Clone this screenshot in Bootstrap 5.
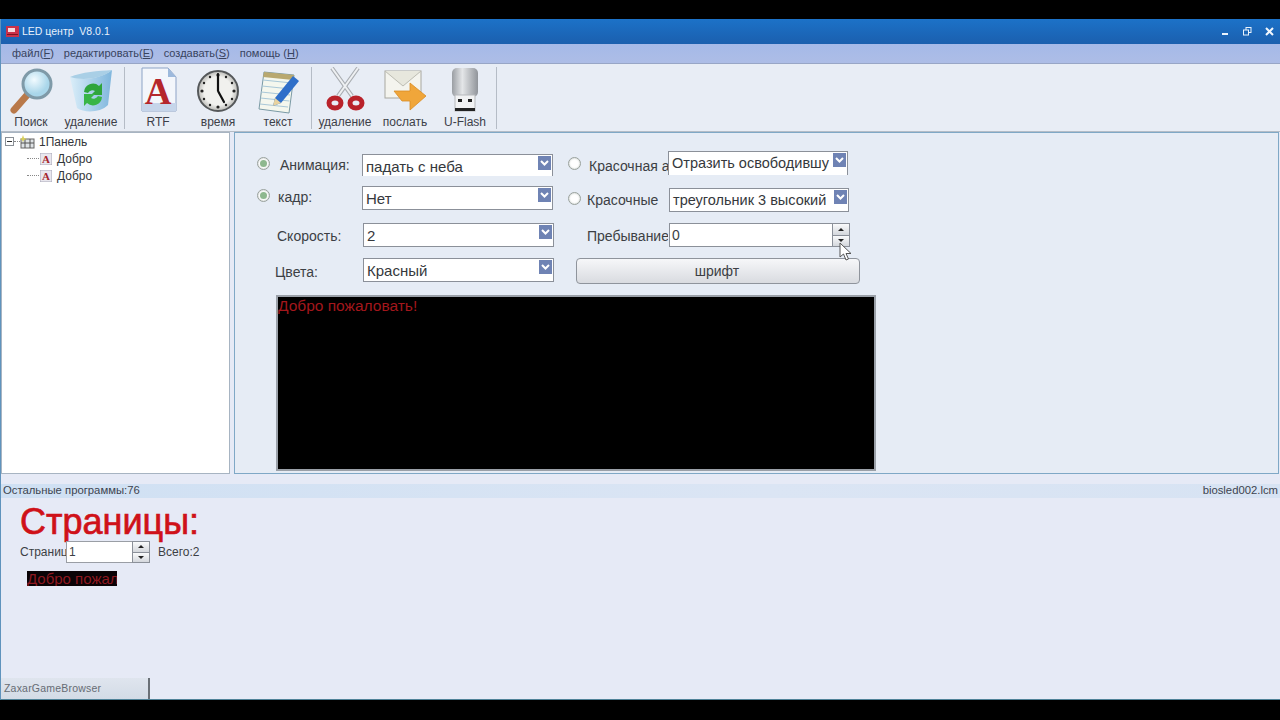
<!DOCTYPE html>
<html lang="ru">
<head>
    <meta charset="UTF-8">
    <title>LED центр</title>
    <link rel="stylesheet" href="https://cdn.jsdelivr.net/npm/bootstrap@5.3.3/dist/css/bootstrap.min.css">
    <style>
        html, body { height: 720px; overflow: hidden; background: #000; }
        body { font-family: "Liberation Sans", Arial, sans-serif; color: #3c3f44; }
        .app-window { margin-top: 19px; height: 681px; position: relative; background: #e6eaf6; border-left: 1px solid #5f93bd; border-bottom: 1px solid #4f8298; }

        /* title + menu */
        .title-bar { height: 25px; background: linear-gradient(#1c72c8, #1b5fae); color: #e8f1fb; font-size: 10.5px; padding: 0 6px 0 5px; }
        .app-logo { width: 13px; height: 11px; margin-right: 3px; }
        .win-btns { gap: 13px; }
        .menu-strip { height: 20px; background: linear-gradient(#a5b9e8, #adbde6); font-size: 11px; color: #38435e; padding-left: 11px; gap: 10px; border-bottom: 1px solid #98a6c6; }

        /* toolbar */
        .tool-strip { height: 68px; background: #e8edf5; border-bottom: 1px solid #b4bcc6; }
        .tool-item { width: 60px; font-size: 12px; color: #3c4048; line-height: 14px; }
        .tool-item svg { width: 50px; height: 48px; margin-top: 3px; }
        .tool-sep { width: 7px; display: flex; justify-content: center; padding: 3px 0 2px; }
        .tool-sep.last-sep { width: 3px; }
        .tool-sep::before { content: ""; width: 1px; background: #b5bcc6; }

        /* tree on the left */
        .work-area { height: 342px; gap: 4px; padding-right: 1px; }
        .tree-pane { width: 229px; background: #fff; border: 1px solid #a7b4c2; font-size: 12px; color: #33363a; padding: 0 0 0 3px; }
        .tree-row { height: 17px; }
        .tree-toggle { width: 9px; height: 9px; border: 1px solid #8a8f96; position: relative; background: #fff; }
        .tree-toggle::after { content: ""; position: absolute; left: 1px; right: 1px; top: 3px; height: 1px; background: #333; }
        .tree-dash { width: 6px; border-top: 1px dotted #888; }
        .tree-child { padding-left: 22px; }
        .tree-child .tree-dash { width: 12px; }
        .tree-child svg { margin: 0 5px 0 1px; }

        /* form on the right */
        .form-pane { flex: 1; background: #e6ecf5; border: 1px solid #7fa8c6; padding: 18px 0 0 20px; font-size: 14px; }
        .form-line { display: grid; grid-template-columns: 107px 192px 14px 100px 192px; }
        .line-a { height: 35px; }
        .line-b { height: 37px; }
        .line-c { height: 35px; }
        .line-d { height: 37px; }
        .field-label { height: 24px; line-height: 20px; white-space: nowrap; overflow: hidden; display: flex; align-items: flex-start; }
        .radio-dot { width: 13px; height: 13px; border-radius: 50%; background: #fff; border: 1px solid #98a09c; flex: none; position: relative; box-shadow: inset 0 0 2px #b5bdb8; }
        .radio-dot.is-on::after { content: ""; position: absolute; inset: 2px; border-radius: 50%; background: #8eb88e; }
        .ind-0 { padding-left: 0; }
        .ind-2 { padding-left: 2px; }
        .ind-22 { padding-left: 22px; }
        .ind-20 { padding-left: 20px; }
        .ind-19 { padding-left: 19px; }
        .gap-6px { margin-right: 6px; }
        .gap-8px { margin-right: 8px; }
        .gap-10px { margin-right: 10px; }
        .drop-1 { margin-top: 1px; }
        .drop-3 { margin-top: 3px; }
        .drop-4 { margin-top: 4px; }
        .drop-5 { margin-top: 5px; }
        .drop-6 { margin-top: 6px; }
        .shift-down { margin-top: 2px; }
        .shift-left { margin-left: 1px; }
        .combo-box { width: 191px; height: 24px; background: #fff; border: 1px solid #8b9099; font-size: 15px; color: #35383c; padding-left: 3px; line-height: 23px; white-space: nowrap; overflow: hidden; position: relative; }
        .combo-box.wide-r { width: 180px; font-size: 14.5px; }
        .combo-box.open-end { border-bottom: 0; }
        .combo-box.short-box { height: 22px; margin-top: 3px; }
        .combo-arrow { position: absolute; right: 1px; top: 1px; width: 13px; height: 14px; background: #6f83b4; display: flex; align-items: center; justify-content: center; }
        .spin-field { width: 181px; height: 24px; background: #fff; border: 1px solid #8b9099; font-size: 14px; line-height: 22px; padding-left: 2px; }
        .spin-btns { width: 18px; margin-right: -1px; margin-top: -1px; margin-bottom: -1px; }
        .spin-btns span { flex: 1; background: linear-gradient(#fafbfc, #d4d7dc); border: 1px solid #8b9099; display: flex; align-items: center; justify-content: center; }
        .spin-btns span + span { border-top: 0; }
        .tri-up { width: 0; height: 0; border: 3px solid transparent; border-top: 0; border-bottom: 3px solid #222; }
        .tri-down { width: 0; height: 0; border: 3px solid transparent; border-bottom: 0; border-top: 3px solid #222; }
        .font-btn { width: 284px; height: 26px; padding: 0 2px 0 0; font-size: 14px; color: #3c3f44; border: 1px solid #8f949c; border-radius: 4px; background: linear-gradient(#f6f7f9, #d9dbe0); margin-left: 8px; }
        .led-screen { width: 600px; height: 176px; margin-left: 21px; background: #000; border: 2px solid #9aa0a8; color: #a3171c; font-size: 15.5px; line-height: 18px; }

        /* status + pages */
        .status-strip { height: 14px; margin-top: 10px; background: linear-gradient(90deg, #cfe0f3, #dbe5f4 60%, #d7e3f3); font-size: 11.3px; line-height: 13px; color: #3d4450; padding: 0 2px; }
        .pages-pane { flex: 1; padding: 5px 0 0 19px; min-height: 0; }
        .pages-title { font-size: 36px; line-height: 38px; color: #cf1119; -webkit-text-stroke: .7px #cf1119; }
        .pages-row { height: 22px; font-size: 12px; color: #3c3f44; }
        .pages-name { width: 46px; overflow: hidden; white-space: nowrap; }
        .pages-spin { width: 84px; height: 22px; background: #fff; border: 1px solid #9a9ea5; padding-left: 2px; line-height: 20px; }
        .pages-total { margin-left: 8px; }
        .page-thumb { width: 90px; height: 15px; margin: 8px 0 0 7px; background: #0a0306; color: #8e1820; font-size: 15px; line-height: 15px; overflow: hidden; white-space: nowrap; }
        .task-tab { width: 149px; height: 21px; background: linear-gradient(#dfe5ee, #d3dbe6); color: #666c74; font-size: 10.5px; line-height: 21px; padding-left: 3px; border-right: 2px solid #6a7077; letter-spacing: .2px; margin-top: auto; }
        .mouse-cursor { position: absolute; left: 838px; top: 223px; width: 13px; height: 19px; }
    </style>
</head>
<body>
    <div class="app-window d-flex flex-column">
        <!-- Title -->
        <div class="title-bar d-flex align-items-center">
            <svg class="app-logo" viewBox="0 0 13 11"><rect width="13" height="11" fill="#c9324a"/><rect x="2" y="2" width="7" height="4" fill="#f4d9dd"/><rect x="1" y="8" width="11" height="1" fill="#7c1420"/></svg>
            <span>LED центр&nbsp; V8.0.1</span>
            <div class="win-btns d-flex align-items-center ms-auto">
                <svg width="9" height="9" viewBox="0 0 9 9"><rect x="1" y="6" width="6" height="2" fill="#eaf3fc"/></svg>
                <svg width="9" height="9" viewBox="0 0 9 9" fill="none" stroke="#eaf3fc"><rect x="3" y=".5" width="5" height="5"/><rect x=".5" y="3" width="5" height="5" fill="#1b66b6"/></svg>
                <svg width="9" height="9" viewBox="0 0 9 9" stroke="#f2f7fd" stroke-width="2"><path d="M1 1l7 7M8 1l-7 7"/></svg>
            </div>
        </div>
        <div class="menu-strip d-flex align-items-center">
            <span>файл(<u>F</u>)</span>
            <span>редактировать(<u>E</u>)</span>
            <span>создавать(<u>S</u>)</span>
            <span>помощь (<u>H</u>)</span>
        </div>

        <!-- Toolbar -->
        <div class="tool-strip d-flex">
            <div class="tool-item text-center">
                <svg viewBox="0 0 50 48"><defs><radialGradient id="lens" cx=".4" cy=".35"><stop offset="0" stop-color="#f2fbff"/><stop offset="1" stop-color="#a9d6ea"/></radialGradient></defs><path d="M8 43L22 27" stroke="#b9794a" stroke-width="7" stroke-linecap="round"/><circle cx="31" cy="17" r="14" fill="url(#lens)" stroke="#7f9aa8" stroke-width="3"/></svg>
                <div>Поиск</div>
            </div>
            <div class="tool-item text-center">
                <svg viewBox="0 0 50 48"><defs><linearGradient id="bin" x1="0" x2="1"><stop offset="0" stop-color="#dbeef9"/><stop offset="1" stop-color="#7fb6dd"/></linearGradient></defs><path d="M4 10C16 14 34 12 46 3L42 38C34 46 18 46 11 41Z" fill="url(#bin)"/><path d="M4 10C16 5 32 4 46 3C36 12 16 14 4 10Z" fill="#a9cfe6"/><path d="M18 25a9 9 0 0 1 15-6l3-3v12H25l4-4a5 5 0 0 0-7 2z" fill="#2fa53c"/><path d="M36 30a9 9 0 0 1-15 6l-3 3V27h11l-4 4a5 5 0 0 0 7-2z" fill="#38b546"/></svg>
                <div>удаление</div>
            </div>
            <div class="tool-sep"></div>
            <div class="tool-item text-center">
                <svg viewBox="0 0 50 48"><path d="M9 1H35L43 10V44H9Z" fill="#f3f6fb" stroke="#8da3c6"/><path d="M35 1V10H43Z" fill="#9db9dc"/><rect x="9" y="36" width="34" height="8" fill="#c6d5ea"/><text x="25" y="37" font-family="Liberation Serif" font-weight="700" font-size="37" fill="#b5272c" text-anchor="middle">A</text></svg>
                <div>RTF</div>
            </div>
            <div class="tool-item text-center">
                <svg viewBox="0 0 50 48"><defs><radialGradient id="face"><stop offset=".7" stop-color="#f1f1ee"/><stop offset="1" stop-color="#b9b9b5"/></radialGradient></defs><circle cx="25" cy="24" r="20" fill="url(#face)" stroke="#55585a" stroke-width="2"/><g fill="#222"><circle cx="25" cy="8" r="1.6"/><circle cx="33" cy="10" r="1.2"/><circle cx="39" cy="16" r="1.2"/><circle cx="41" cy="24" r="1.6"/><circle cx="39" cy="32" r="1.2"/><circle cx="33" cy="38" r="1.2"/><circle cx="25" cy="40" r="1.6"/><circle cx="17" cy="38" r="1.2"/><circle cx="11" cy="32" r="1.2"/><circle cx="9" cy="24" r="1.6"/><circle cx="11" cy="16" r="1.2"/><circle cx="17" cy="10" r="1.2"/></g><path d="M25 24V7M25 24l6 11" stroke="#111" stroke-width="2.2" stroke-linecap="round"/></svg>
                <div>время</div>
            </div>
            <div class="tool-item text-center">
                <svg viewBox="0 0 50 48"><path d="M11 5L41 8L36 46L6 42Z" fill="#f4f7ee" stroke="#7a9aa5"/><path d="M10 13l29 3M9 19l29 3M8 25l29 3M7.500 31l29 3M7 37l28 3" stroke="#a9c8d8"/><path d="M11 5L41 8L40 13L10 10Z" fill="#b8a86f"/><path d="M22 31L40 9L46 14L28 36L20 39Z" fill="#2f6fc9"/><path d="M22 31L28 36L20 39Z" fill="#e8d3a0"/></svg>
                <div>текст</div>
            </div>
            <div class="tool-sep"></div>
            <div class="tool-item text-center">
                <svg viewBox="0 0 50 48"><path d="M12 1L32 29M38 1L18 29" stroke="#a9adb2" stroke-width="4"/><path d="M12 1L32 29M38 1L18 29" stroke="#eef0f2" stroke-width="2"/><ellipse cx="15" cy="36" rx="6" ry="5" fill="#e8edf5" stroke="#b9222a" stroke-width="5"/><ellipse cx="36" cy="36" rx="6" ry="5" fill="#e8edf5" stroke="#b9222a" stroke-width="5"/></svg>
                <div>удаление</div>
            </div>
            <div class="tool-item text-center">
                <svg viewBox="0 0 50 48"><rect x="5" y="4" width="36" height="27" fill="#f4f4ee" stroke="#a8a8a0"/><path d="M5 4L23 19L41 4" fill="#e7e7dd" stroke="#bdbdb3"/><path d="M14 24H30V16L46 29L30 43V34H22Z" fill="#f0a63a" stroke="#d98d24" stroke-width=".8"/></svg>
                <div>послать</div>
            </div>
            <div class="tool-item text-center">
                <svg viewBox="0 0 50 48"><defs><linearGradient id="usb" x1="0" x2="1"><stop offset="0" stop-color="#9a9ea3"/><stop offset=".4" stop-color="#e4e6e8"/><stop offset="1" stop-color="#90949a"/></linearGradient></defs><rect x="12" y="1" width="26" height="29" rx="5" fill="url(#usb)"/><rect x="15" y="28" width="20" height="16" fill="#f1f2f3" stroke="#b5b8bb"/><rect x="18" y="32" width="4" height="3" fill="#222"/><rect x="28" y="32" width="4" height="3" fill="#222"/><rect x="15" y="41" width="20" height="3" fill="#222"/></svg>
                <div>U-Flash</div>
            </div>
            <div class="tool-sep last-sep"></div>
        </div>

        <!-- Tree and form -->
        <div class="work-area d-flex">
            <div class="tree-pane">
                <div class="tree-row d-flex align-items-center">
                    <span class="tree-toggle"></span><span class="tree-dash"></span>
                    <svg width="15" height="14" viewBox="0 0 15 14"><rect x="1" y="4" width="13" height="9" fill="#dfe3e6" stroke="#666"/><path d="M5 4v9M10 4v9M1 8h13" stroke="#555"/><path d="M3 0l1 3 3 1-3 1-1 2-1-2-2-1 2-1z" fill="#d8cf5a"/></svg>
                    <span class="ms-1">1Панель</span>
                </div>
                <div class="tree-row tree-child d-flex align-items-center">
                    <span class="tree-dash"></span>
                    <svg width="12" height="12" viewBox="0 0 12 12"><rect width="12" height="12" fill="#e9e7ee" stroke="#a9a9b9"/><text x="6" y="10" font-family="Liberation Serif" font-weight="700" font-size="11" fill="#a5242b" text-anchor="middle">A</text></svg>
                    <span>Добро</span>
                </div>
                <div class="tree-row tree-child d-flex align-items-center">
                    <span class="tree-dash"></span>
                    <svg width="12" height="12" viewBox="0 0 12 12"><rect width="12" height="12" fill="#e9e7ee" stroke="#a9a9b9"/><text x="6" y="10" font-family="Liberation Serif" font-weight="700" font-size="11" fill="#a5242b" text-anchor="middle">A</text></svg>
                    <span>Добро</span>
                </div>
            </div>

            <div class="form-pane">
                <div class="form-line line-a">
                    <div class="field-label ind-2"><span class="radio-dot is-on gap-10px drop-6"></span><span class="drop-4">Анимация:</span></div>
                    <div class="combo-box open-end short-box">падать с неба<span class="combo-arrow"><svg width="9" height="7" viewBox="0 0 9 7"><path d="M1 1l3.500 3.500L8 1" stroke="#fff" stroke-width="2" fill="none"/></svg></span></div>
                    <div></div>
                    <div class="field-label ind-0"><span class="radio-dot gap-8px drop-6"></span><span class="drop-5">Красочная анимация</span></div>
                    <div class="combo-box wide-r open-end">Отразить освободившу<span class="combo-arrow"><svg width="9" height="7" viewBox="0 0 9 7"><path d="M1 1l3.500 3.500L8 1" stroke="#fff" stroke-width="2" fill="none"/></svg></span></div>
                </div>
                <div class="form-line line-b">
                    <div class="field-label ind-2"><span class="radio-dot is-on gap-8px drop-3"></span><span class="drop-1">кадр:</span></div>
                    <div class="combo-box">Нет<span class="combo-arrow"><svg width="9" height="7" viewBox="0 0 9 7"><path d="M1 1l3.500 3.500L8 1" stroke="#fff" stroke-width="2" fill="none"/></svg></span></div>
                    <div></div>
                    <div class="field-label ind-0"><span class="radio-dot gap-6px drop-6"></span><span class="drop-4">Красочные</span></div>
                    <div class="combo-box wide-r shift-down shift-left">треугольник 3 высокий<span class="combo-arrow"><svg width="9" height="7" viewBox="0 0 9 7"><path d="M1 1l3.500 3.500L8 1" stroke="#fff" stroke-width="2" fill="none"/></svg></span></div>
                </div>
                <div class="form-line line-c">
                    <div class="field-label ind-22"><span class="drop-3">Скорость:</span></div>
                    <div class="combo-box shift-left">2<span class="combo-arrow"><svg width="9" height="7" viewBox="0 0 9 7"><path d="M1 1l3.500 3.500L8 1" stroke="#fff" stroke-width="2" fill="none"/></svg></span></div>
                    <div></div>
                    <div class="field-label ind-19"><span class="drop-3">Пребывание</span></div>
                    <div class="spin-field d-flex shift-left"><span class="flex-grow-1">0</span><div class="spin-btns d-flex flex-column"><span><i class="tri-up"></i></span><span><i class="tri-down"></i></span></div></div>
                </div>
                <div class="form-line line-d">
                    <div class="field-label ind-20"><span class="drop-4">Цвета:</span></div>
                    <div class="combo-box shift-left">Красный<span class="combo-arrow"><svg width="9" height="7" viewBox="0 0 9 7"><path d="M1 1l3.500 3.500L8 1" stroke="#fff" stroke-width="2" fill="none"/></svg></span></div>
                    <div></div>
                    <div><button type="button" class="btn font-btn">шрифт</button></div>
                </div>
                <div class="led-screen">Добро пожаловать!</div>
            </div>
        </div>

        <!-- Status -->
        <div class="status-strip d-flex justify-content-between">
            <span>Остальные программы:76</span>
            <span>biosled002.lcm</span>
        </div>

        <!-- Pages -->
        <div class="pages-pane">
            <div class="pages-title">Страницы:</div>
            <div class="pages-row d-flex align-items-center">
                <span class="pages-name">Страница</span>
                <div class="pages-spin d-flex"><span class="flex-grow-1">1</span><div class="spin-btns d-flex flex-column"><span><i class="tri-up"></i></span><span><i class="tri-down"></i></span></div></div>
                <span class="pages-total">Всего:2</span>
            </div>
            <div class="page-thumb">Добро пожаловать!</div>
        </div>
        <div class="task-tab">ZaxarGameBrowser</div>

        <svg class="mouse-cursor" viewBox="0 0 13 19"><path d="M1 1V15L4.500 12L7 18L9.500 17L7 11.500H12Z" fill="#fff" stroke="#555"/></svg>
    </div>
    <script src="https://cdn.jsdelivr.net/npm/bootstrap@5.3.3/dist/js/bootstrap.bundle.min.js"></script>
</body>
</html>
